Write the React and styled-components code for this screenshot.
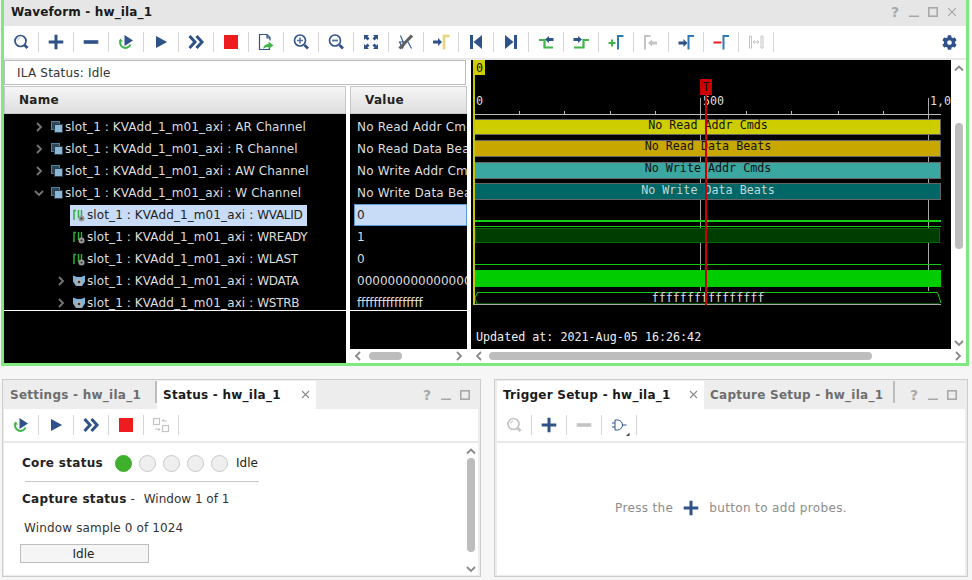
import React from "react";
import styled, { createGlobalStyle } from "styled-components";
import { FaCog } from "react-icons/fa";

const NAVY = "#2f5288";
const GREEN = "#3fb54a";
const OFF = "#c4c4c4";
const BLUE = "#2f7ab5";

const GlobalStyle = createGlobalStyle`
  html, body { margin: 0; padding: 0; overflow: hidden; background: #f6f6f6; }
  body { font-family: "DejaVu Sans", sans-serif; font-size: 12px; color: #222; }
`;

const glyphs = {
  search: (c = NAVY) => (
    <>
      <circle cx="10.5" cy="10" r="5.5" fill="none" stroke={c} strokeWidth="1.7" />
      <path d="M14.5 14L17.500 17" stroke={c} strokeWidth="2.6" />
      <path d="M7.500 9.500a3.200 3.200 0 0 1 2.500-2.500" fill="none" stroke="#9db4d4" strokeWidth="1" />
    </>
  ),
  plus: (c = NAVY) => <path d="M3.7 9.5h5.8V3.7h3v5.8h5.8v3h-5.8v5.8h-3v-5.8H3.7z" fill={c} />,
  minus: (c = NAVY) => <rect x="3.7" y="9.2" width="14.6" height="3.6" fill={c} />,
  rerun: () => (
    <>
      <path d="M5.500 9.500a5.300 5.300 0 1 0 10 4" fill="none" stroke={GREEN} strokeWidth="2" />
      <path d="M3.500 10.500h4.500L5.500 7.500z" fill={GREEN} />
      <path d="M9.500 4L18 9.500 9.500 15z" fill={NAVY} />
    </>
  ),
  play: () => <path d="M6 5l11.2 6L6 17z" fill={NAVY} />,
  forward: () => (
    <path d="M4.5 5l5.5 6-5.5 6M11.5 5l5.5 6-5.5 6" fill="none" stroke={NAVY} strokeWidth="3" />
  ),
  stop: () => <rect x="4" y="4" width="14" height="14" fill="#ee1c1f" />,
  exportFile: () => (
    <>
      <path d="M14.500 15v3.500H4.500v-15H12l3 3v3M12 3.500V7h3" fill="none" stroke={NAVY} strokeWidth="1.200" />
      <path d="M8 18c.5-3.500 2.500-5 5.500-5v-2.500l5 4-5 3.500v-2c-2 0-3.500.5-5.500 2z" fill={GREEN} />
    </>
  ),
  zoomIn: () => (
    <>
      <circle cx="10" cy="9.5" r="5.5" fill="none" stroke={NAVY} strokeWidth="1.600" />
      <path d="M14.500 14l3.500 3.500" stroke={NAVY} strokeWidth="2.600" />
      <path d="M7 9.500h6M10 6.500v6" stroke="#55749f" strokeWidth="1.600" />
    </>
  ),
  zoomOut: () => (
    <>
      <circle cx="10" cy="9.5" r="5.5" fill="none" stroke={NAVY} strokeWidth="1.600" />
      <path d="M14.500 14l3.500 3.500" stroke={NAVY} strokeWidth="2.600" />
      <path d="M7 9.500h6" stroke="#55749f" strokeWidth="1.800" />
    </>
  ),
  fit: () => (
    <g fill={NAVY}>
      <path d="M4 4h5L7.500 5.500l2 2-2 2-2-2L4 9z" />
      <path d="M18 4h-5l1.500 1.500-2 2 2 2 2-2L18 9z" />
      <path d="M4 18h5l-1.500-1.500 2-2-2-2-2 2L4 13z" />
      <path d="M18 18h-5l1.500-1.500-2-2 2-2 2 2L18 13z" />
    </g>
  ),
  cursorOff: () => (
    <>
      <path d="M5.500 4.500l3 7.500M13 11l3.500 6.500M4.500 11h6l-3 6z" fill="none" stroke={NAVY} strokeWidth="1.100" />
      <path d="M4.500 17.500L17 4.500" stroke="#606060" strokeWidth="3.200" />
    </>
  ),
  markerIn: () => (
    <>
      <path d="M3 9.500h5V7l4 4-4 4v-2.500H3z" fill={NAVY} />
      <path d="M14 18.500V5h5.500" fill="none" stroke="#e8d47c" strokeWidth="2.600" />
    </>
  ),
  first: () => <path d="M5 4h3v14H5zM8.500 11L17 4v14z" fill={NAVY} />,
  last: () => <path d="M14 4h3v14h-3zM13.500 11L5 4v14z" fill={NAVY} />,
  prevEdge: () => (
    <>
      <path d="M4 9h5.500v7.500H18" fill="none" stroke={GREEN} strokeWidth="2.200" />
      <path d="M10 8.500l4-3.500v2h4.500v3H14v2z" fill={NAVY} />
    </>
  ),
  nextEdge: () => (
    <>
      <path d="M4 16.500h9.500V9H19" fill="none" stroke={GREEN} strokeWidth="2.200" />
      <path d="M12 8.500L8 5v2H3.500v3H8v2z" fill={NAVY} />
    </>
  ),
  addMarker: () => (
    <>
      <path d="M3.500 11h2.500V8.500h2V11h2.500v2H8v2.500H6V13H3.500z" fill={GREEN} />
      <path d="M13 18.500V5h5.500" fill="none" stroke={BLUE} strokeWidth="2" />
    </>
  ),
  prevMarker: () => (
    <>
      <path d="M5 18.500V5h5.500" fill="none" stroke={OFF} strokeWidth="2" />
      <path d="M8 12l4-3.500v2h5v3h-5v2z" fill={OFF} />
    </>
  ),
  nextMarker: () => (
    <>
      <path d="M3.500 10.500h5V8l4 4-4 4v-2.500h-5z" fill={NAVY} />
      <path d="M13.500 18.500V5h5.500" fill="none" stroke={BLUE} strokeWidth="2" />
    </>
  ),
  removeMarker: () => (
    <>
      <rect x="3.500" y="10.500" width="8" height="2" fill="#ee1c1f" />
      <path d="M13.500 18.500V5h5.500" fill="none" stroke={BLUE} strokeWidth="2" />
    </>
  ),
  measure: () => (
    <path d="M4.500 5v12h2V5zM16 5v12h2V5zM8 11h6M8 11l2-1.800M8 11l2 1.800M14 11l-2-1.800M14 11l-2 1.800" fill="none" stroke={OFF} strokeWidth="1" />
  ),
  swap: () => (
    <g fill="none" stroke={OFF} strokeWidth="1.200">
      <rect x="3.500" y="4.500" width="6" height="6" />
      <rect x="12.500" y="11.500" width="6" height="6" />
      <path d="M12 7h5M12 7l2-1.500M5 15h5M10 15l-2 1.500" />
    </g>
  ),
  gate: () => (
    <>
      <path d="M7 6h2.500a5 5 0 0 1 0 10H7zM4 9h3M4 13h3M14.500 11h4" fill="none" stroke={NAVY} strokeWidth="1" />
      <path d="M21.500 18.500V22H18z" fill="#444" />
    </>
  ),
};

const mainTools = [
  ["search"], ["plus"], ["minus"], ["rerun"], ["play"], ["forward"], ["stop"], ["exportFile"],
  ["zoomIn"], ["zoomOut"], ["fit"], ["cursorOff"], ["markerIn"], ["first"], ["last"], ["prevEdge"],
  ["nextEdge"], ["addMarker"], ["prevMarker"], ["nextMarker"], ["removeMarker"], ["measure"],
];

const signals = [
  { name: "AR Channel", value: "No Read Addr Cmds", kind: "group", level: 1, twist: "closed", spacing: 0.2 },
  { name: "R Channel", value: "No Read Data Beats", kind: "group", level: 1, twist: "closed", spacing: 0.2 },
  { name: "AW Channel", value: "No Write Addr Cmds", kind: "group", level: 1, twist: "closed", spacing: 0.2 },
  { name: "W Channel", value: "No Write Data Beats", kind: "group", level: 1, twist: "open", spacing: 0.2 },
  { name: "WVALID", value: "0", kind: "wire", level: 2, selected: true },
  { name: "WREADY", value: "1", kind: "wire", level: 2 },
  { name: "WLAST", value: "0", kind: "wire", level: 2 },
  { name: "WDATA", value: "00000000000000000000", kind: "bus", level: 2, twist: "closed" },
  { name: "WSTRB", value: "ffffffffffffffff", kind: "bus", level: 2, twist: "closed", spacing: -0.12 },
];

const Page = styled.div`
  width: 972px;
  height: 580px;
  overflow: hidden;
  background: #f6f6f6;
  display: flex;
  flex-direction: column;
`;

const WaveWindow = styled.section`
  width: 962px;
  height: 363px;
  margin-left: 1px;
  flex: none;
  border: 3px solid #80e880;
  border-top: 0;
  background: #fff;
  display: flex;
  flex-direction: column;
`;

const TitleBar = styled.header`
  height: 26px;
  box-sizing: border-box;
  flex: none;
  background: #e6e6e6;
  display: flex;
  align-items: center;
  padding: 0 9px 2px 7px;
`;

const Title = styled.div`
  font-weight: 700;
  font-size: 12px;
  letter-spacing: 0.15px;
  color: #1a1a1a;
  flex: 1;
`;

const WinControls = styled.div`
  display: flex;
  align-items: center;
  gap: 9px;
`;

const Help = styled.span`
  font-weight: 700;
  font-size: 14px;
  line-height: 14px;
  color: #a8a8a8;
  width: 10px;
  text-align: center;
`;

const Toolbar = styled.div`
  height: 32px;
  flex: none;
  border-bottom: 2px solid #e8e8e8;
  background: #fff;
  display: flex;
  align-items: center;
`;

const ToolButton = styled.div`
  width: 35px;
  height: 20px;
  flex: none;
  display: flex;
  align-items: center;
  justify-content: center;
  border-right: 1px solid #d6d6d6;
  box-sizing: border-box;
`;

const GearSlot = styled.div`
  margin-left: auto;
  margin-right: 9px;
  color: ${NAVY};
  display: flex;
`;

const Split = styled.div`
  flex: 1;
  display: flex;
  min-height: 0;
`;

const SignalPane = styled.div`
  width: 463px;
  flex: none;
  display: flex;
  flex-direction: column;
`;

const IlaStatus = styled.div`
  height: 25px;
  box-sizing: border-box;
  flex: none;
  border: 1px solid #bdbdbd;
  width: 462px;
  padding-left: 12px;
  letter-spacing: 0.2px;
  display: flex;
  align-items: center;
  color: #333;
`;

const Columns = styled.div`
  flex: 1;
  display: grid;
  grid-template-columns: 342px 117px;
  column-gap: 4px;
  padding-top: 1px;
  min-height: 0;
`;

const Column = styled.div`
  display: flex;
  flex-direction: column;
  min-height: 0;
  min-width: 0;
`;

const ColumnHead = styled.div`
  height: 28px;
  flex: none;
  box-sizing: border-box;
  border: 1px solid #c8c8c8;
  background: linear-gradient(#f6f6f6, #dedede);
  display: flex;
  align-items: center;
  padding-left: 14px;
  font-weight: 700;
  letter-spacing: 0.3px;
  color: #222;
`;

const ColumnBody = styled.div`
  flex: 1;
  background: #000;
  min-height: 0;
`;

const Rows = styled.div`
  height: 194px;
  padding-top: 2px;
  border-bottom: 1px solid #fff;
  overflow: hidden;
`;

const TreeRow = styled.div`
  height: 22px;
  display: flex;
  align-items: center;
  padding-left: ${(p) => (p.$level === 1 ? 29 : 51)}px;
  color: #dedede;
`;

const Twist = styled.span`
  width: 12px;
  height: 12px;
  margin-right: 3px;
  flex: none;
  display: flex;
  align-items: center;
  justify-content: center;
`;

const Label = styled.span`
  display: flex;
  align-items: center;
  height: ${(p) => (p.$selected ? 21 : 22)}px;
  padding: 0 5px 0 2px;
  white-space: pre;
  letter-spacing: 0.1px;
  background: ${(p) => (p.$selected ? "#c8dcf8" : "transparent")};
  color: ${(p) => (p.$selected ? "#222" : "inherit")};
`;

const Port = styled.span`
  letter-spacing: ${(p) => (p.$level === 1 ? 0.1 : -0.3)}px;
`;

const SignalIcon = styled.svg`
  width: 14px;
  height: 14px;
  margin-right: 1px;
  flex: none;
`;

const ValueCell = styled.div`
  height: 22px;
  box-sizing: border-box;
  display: flex;
  align-items: center;
  white-space: nowrap;
  overflow: hidden;
  letter-spacing: ${(p) => p.$spacing || 0}px;
  margin-left: ${(p) => (p.$selected ? 4 : 0)}px;
  padding-left: ${(p) => (p.$selected ? 2 : 7)}px;
  border: ${(p) => (p.$selected ? "1px solid #5a9ad8" : "0")};
  background: ${(p) => (p.$selected ? "#c8dcf8" : "transparent")};
  color: ${(p) => (p.$selected ? "#222" : "#dedede")};
`;

const HBar = styled.div`
  height: 14px;
  flex: none;
  background: #fff;
  display: flex;
  align-items: center;
  justify-content: space-between;
  padding: 0 3px;
`;

const HTrack = styled.div`
  flex: 1;
  height: 8px;
  margin: 0 4px;
  display: flex;
`;

const Thumb = styled.div`
  background: #bdbdbd;
  border-radius: 4px;
`;

const HThumb = styled(Thumb)`
  margin-left: ${(p) => p.$start}px;
  width: ${(p) => p.$size}px;
`;

const VBar = styled.div`
  width: ${(p) => p.$width || 15}px;
  flex: none;
  background: #fff;
  display: flex;
  flex-direction: column;
  align-items: center;
  justify-content: space-between;
  padding: 3px 0 1px;
  box-sizing: border-box;
`;

const VTrack = styled.div`
  flex: 1;
  width: 8px;
  display: flex;
  flex-direction: column;
`;

const VThumb = styled(Thumb)`
  margin-top: ${(p) => p.$start}px;
  height: ${(p) => p.$size}px;
`;

const WavePane = styled.div`
  flex: 1;
  margin-left: 4px;
  display: flex;
  flex-direction: column;
  min-width: 0;
`;

const WaveRow = styled.div`
  flex: 1;
  display: flex;
  min-height: 0;
`;

const WaveSvg = styled.svg`
  width: 480px;
  height: 289px;
  flex: none;
  display: block;
  background: #000;
`;

const BottomRow = styled.div`
  flex: 1;
  display: flex;
  gap: 13px;
  padding: 13px 0 3px 2px;
`;

const Panel = styled.section`
  width: ${(p) => p.$width}px;
  box-sizing: border-box;
  flex: none;
  border: 1px solid #cccccc;
  padding: 1px 2px 1px ${(p) => p.$left}px;
  background: #ededed;
  display: flex;
  flex-direction: column;
`;

const TabBar = styled.div`
  height: 28px;
  flex: none;
  display: flex;
  align-items: stretch;
`;

const Tab = styled.div`
  width: ${(p) => p.$width}px;
  box-sizing: border-box;
  flex: none;
  display: flex;
  align-items: center;
  justify-content: space-between;
  padding: 0 6px 1px 6px;
  font-weight: 700;
  letter-spacing: 0.25px;
  background: ${(p) => (p.$active ? "#fff" : "transparent")};
  color: ${(p) => (p.$active ? "#1a1a1a" : "#6e6e6e")};
  white-space: nowrap;
`;

const TabDivider = styled.div`
  width: 2px;
  flex: none;
  height: 22px;
  background: #bcbcbc;
`;

const PanelControls = styled(WinControls)`
  margin-left: auto;
  padding: 0 ${(p) => p.$right}px 0 0;
`;

const PanelBody = styled.div`
  flex: 1;
  background: #fff;
  display: flex;
  min-height: 0;
`;

const StatusContent = styled.div`
  flex: 1;
  padding: 10px 0 0 18px;
  display: flex;
  flex-direction: column;
  align-items: flex-start;
`;

const CoreRow = styled.div`
  display: flex;
  align-items: center;
  height: 20px;
`;

const Strong = styled.span`
  font-weight: 700;
  letter-spacing: 0.3px;
  color: #222;
`;

const Lamps = styled.div`
  display: flex;
  gap: 7px;
  margin: 0 8px 0 12px;
`;

const Lamp = styled.span`
  width: 17px;
  height: 17px;
  box-sizing: border-box;
  border-radius: 50%;
  border: 1px solid ${(p) => (p.$on ? "#3fb02c" : "#c8c8c8")};
  background: ${(p) => (p.$on ? "#3fb02c" : "#efefef")};
`;

const Rule = styled.div`
  width: 234px;
  height: 1px;
  background: #c8c8c8;
  margin: 8px 0 7px 3px;
`;

const CaptureRow = styled.div`
  height: 20px;
  display: flex;
  align-items: center;
  color: #333;
`;

const CaptureValue = styled.span`
  margin-left: 9px;
`;

const SampleLine = styled.div`
  margin: 9px 0 6px 2px;
  height: 20px;
  letter-spacing: 0.15px;
  display: flex;
  align-items: center;
  color: #333;
`;

const ProgressBox = styled.div`
  width: 129px;
  height: 19px;
  box-sizing: border-box;
  border: 1px solid #bdbdbd;
  background: #f5f5f5;
  margin-left: -2px;
  padding-right: 2px;
  display: flex;
  align-items: center;
  justify-content: center;
  color: #222;
`;

const EmptyHint = styled.div`
  flex: 1;
  display: flex;
  align-items: center;
  justify-content: center;
  gap: 7px;
  color: #8c8c8c;
  letter-spacing: 0.35px;
  padding-bottom: 3px;
`;

const Glyph = ({ name, color, size = 22 }) => (
  <svg width={size} height={size} viewBox="0 0 22 22">{glyphs[name](color)}</svg>
);

const Tools = ({ items }) => (
  <>
    {items.map(([name, color], i) => (
      <ToolButton key={i}>
        <Glyph name={name} color={color} />
      </ToolButton>
    ))}
  </>
);

const Arrow = ({ dir, color = "#8a8a8a" }) => {
  const d = {
    up: "M1 7.500L5 3.500 9 7.500",
    down: "M1 3L5 7 9 3",
    left: "M7 1L3 5 7 9",
    right: "M3 1L7 5 3 9",
  }[dir];
  return (
    <svg width="10" height="10" viewBox="0 0 10 10">
      <path d={d} fill="none" stroke={color} strokeWidth="1.800" />
    </svg>
  );
};

const SignalGlyph = ({ kind }) => (
  <SignalIcon viewBox="0 0 14 14">
    {kind === "group" && (
      <>
        <rect x="1.500" y="1.500" width="8" height="8" fill="#2a4a5a" stroke="#4d7f9f" />
        <rect x="4.500" y="4.500" width="8" height="8" fill="#8cb8d8" stroke="#2b3f4f" />
      </>
    )}
    {kind === "wire" && (
      <>
        <path d="M2 12V2.500h2M6.500 10V2M9.500 8V2" fill="none" stroke="#2fae3c" strokeWidth="1.500" />
        <circle cx="9.500" cy="10.500" r="3" fill="#9a9a9a" />
        <circle cx="9.500" cy="10.500" r="1.100" fill="#333" />
      </>
    )}
    {kind === "bus" && (
      <>
        <path d="M1 1.500l4 1.500h4l4-1.500v6L10 12H4L1 7.500z" fill="#7db4dc" />
        <circle cx="7" cy="8" r="3.300" fill="#b0b0b0" />
        <circle cx="7" cy="8" r="1.300" fill="#333" />
      </>
    )}
  </SignalIcon>
);

const Close = ({ color = "#8a8a8a", size = 9 }) => (
  <svg width={size} height={size} viewBox="0 0 9 9">
    <path d="M1 1l7 7M8 1L1 8" stroke={color} strokeWidth="1.100" />
  </svg>
);

const Minimize = () => (
  <svg width="10" height="11" viewBox="0 0 10 11">
    <rect x="0" y="8.500" width="10" height="1.500" fill="#a8a8a8" />
  </svg>
);

const Restore = () => (
  <svg width="10" height="10" viewBox="0 0 10 10">
    <rect x="0.800" y="0.800" width="8.400" height="8.400" fill="none" stroke="#a8a8a8" strokeWidth="1.600" />
  </svg>
);

const buses = [
  { y: 119.5, h: 15, fill: "#cdcd00", text: "No Read Addr Cmds", ink: "#111", ty: 129 },
  { y: 140.5, h: 16, fill: "#c8a800", text: "No Read Data Beats", ink: "#111", ty: 150 },
  { y: 162.5, h: 16, fill: "#3aa8a0", text: "No Write Addr Cmds", ink: "#111", ty: 172 },
  { y: 183.5, h: 16, fill: "#006666", text: "No Write Data Beats", ink: "#c4d8d8", ty: 194 },
];

const minorTicks = [519, 564, 610, 655, 746, 791, 838, 883];

const Waveform = () => (
  <WaveSvg viewBox="471 60 480 289" fontFamily="'DejaVu Sans Mono', monospace" fontSize="11.7">
    <path d="M700.500 98V291M928.500 98V291" stroke="#a8a8a8" />
    <path d="M475 114.500H941" stroke="#bdbdbd" />
    {minorTicks.map((x) => (
      <path key={x} d={`M${x + 0.5} 111V114`} stroke="#bdbdbd" />
    ))}
    <text x="476" y="105" fill="#ddd">0</text>
    <text x="703" y="105" fill="#ddd">500</text>
    <text x="930" y="105" fill="#ddd">1,0</text>
    {buses.map((b) => (
      <g key={b.text}>
        <rect x="474.500" y={b.y} width="466" height={b.h} fill={b.fill} stroke="#666" />
        <text x="708" y={b.ty} fill={b.ink} textAnchor="middle">{b.text}</text>
      </g>
    ))}
    <rect x="475" y="220" width="466" height="2" fill="#14d214" />
    <path d="M475 226.500H941" stroke="#14c814" />
    <rect x="475.500" y="228.500" width="464" height="14" fill="#003d00" stroke="#006600" />
    <path d="M475 264.500H941" stroke="#14c814" />
    <rect x="475" y="270" width="466" height="17" fill="#00cc00" />
    <path d="M475 298L477.500 292.500H937.500L941 303" fill="none" stroke="#14c814" />
    <path d="M475 298L477 304H939" fill="none" stroke="#14a014" />
    <path d="M475 304.500H941" stroke="#a8a8a8" />
    <text x="708" y="302" fill="#ddd" textAnchor="middle">ffffffffffffffff</text>
    <rect x="473" y="60" width="2" height="245" fill="#c8c800" />
    <rect x="473" y="60" width="12" height="15" fill="#cdcd00" />
    <text x="476" y="71.500" fill="#111">0</text>
    <rect x="705" y="90" width="2" height="215" fill="#cc0000" />
    <rect x="700" y="79" width="12" height="16" fill="#cc0000" />
    <text x="706" y="91" fill="#111" textAnchor="middle">T</text>
    <text x="476" y="341" fill="#eee">Updated at: 2021-Aug-05 16:26:42</text>
  </WaveSvg>
);

export default function App() {
  return (
    <Page>
      <GlobalStyle />
      <WaveWindow>
        <TitleBar>
          <Title>Waveform - hw_ila_1</Title>
          <WinControls>
            <Help>?</Help>
            <Minimize />
            <Restore />
            <Close color="#a8a8a8" size={10} />
          </WinControls>
        </TitleBar>
        <Toolbar>
          <Tools items={mainTools} />
          <GearSlot><FaCog size={15} /></GearSlot>
        </Toolbar>
        <Split>
          <SignalPane>
            <IlaStatus>ILA Status: Idle</IlaStatus>
            <Columns>
              <Column>
                <ColumnHead>Name</ColumnHead>
                <ColumnBody>
                  <Rows>
                    {signals.map((s) => (
                      <TreeRow key={s.name} $level={s.level}>
                        <Twist>
                          {s.twist && <Arrow dir={s.twist === "open" ? "down" : "right"} color="#777" />}
                        </Twist>
                        <Label $selected={s.selected}>
                          <SignalGlyph kind={s.kind} />
                          {"slot_1 : KVAdd_1_m01_axi : "}
                          <Port $level={s.level}>{s.name}</Port>
                        </Label>
                      </TreeRow>
                    ))}
                  </Rows>
                </ColumnBody>
              </Column>
              <Column>
                <ColumnHead>Value</ColumnHead>
                <ColumnBody>
                  <Rows>
                    {signals.map((s) => (
                      <ValueCell key={s.name} $selected={s.selected} $spacing={s.spacing}>{s.value}</ValueCell>
                    ))}
                  </Rows>
                </ColumnBody>
                <HBar>
                  <Arrow dir="left" />
                  <HTrack><HThumb $start={2} $size={33} /></HTrack>
                  <Arrow dir="right" />
                </HBar>
              </Column>
            </Columns>
          </SignalPane>
          <WavePane>
            <WaveRow>
              <Waveform />
              <VBar>
                <Arrow dir="up" />
                <VTrack><VThumb $start={50} $size={126} /></VTrack>
                <Arrow dir="down" />
              </VBar>
            </WaveRow>
            <HBar>
              <Arrow dir="left" />
              <HTrack><HThumb $start={1} $size={383} /></HTrack>
              <Arrow dir="right" />
            </HBar>
          </WavePane>
        </Split>
      </WaveWindow>

      <BottomRow>
        <Panel $width={479} $left={1}>
          <TabBar>
            <Tab $width={151}>Settings - hw_ila_1</Tab>
            <TabDivider />
            <Tab $width={159} $active>
              Status - hw_ila_1
              <Close />
            </Tab>
            <PanelControls $right={8}>
              <Help>?</Help>
              <Minimize />
              <Restore />
            </PanelControls>
          </TabBar>
          <Toolbar>
            <Tools items={[["rerun"], ["play"], ["forward"], ["stop"], ["swap"]]} />
          </Toolbar>
          <PanelBody>
            <StatusContent>
              <CoreRow>
                <Strong>Core status</Strong>
                <Lamps>
                  <Lamp $on />
                  <Lamp />
                  <Lamp />
                  <Lamp />
                  <Lamp />
                </Lamps>
                Idle
              </CoreRow>
              <Rule />
              <CaptureRow>
                <Strong>Capture status</Strong>&nbsp;-
                <CaptureValue>Window 1 of 1</CaptureValue>
              </CaptureRow>
              <SampleLine>Window sample 0 of 1024</SampleLine>
              <ProgressBox>Idle</ProgressBox>
            </StatusContent>
            <VBar $width={14}>
              <Arrow dir="up" />
              <VTrack><VThumb $start={2} $size={94} /></VTrack>
              <Arrow dir="down" />
            </VBar>
          </PanelBody>
        </Panel>
        <Panel $width={474} $left={2}>
          <TabBar>
            <Tab $width={207} $active>
              Trigger Setup - hw_ila_1
              <Close />
            </Tab>
            <Tab $width={189}>Capture Setup - hw_ila_1</Tab>
            <TabDivider />
            <PanelControls $right={8}>
              <Help>?</Help>
              <Minimize />
              <Restore />
            </PanelControls>
          </TabBar>
          <Toolbar>
            <Tools items={[["search", OFF], ["plus"], ["minus", OFF], ["gate"]]} />
          </Toolbar>
          <PanelBody>
            <EmptyHint>
              Press the
              <Glyph name="plus" size={22} />
              button to add probes.
            </EmptyHint>
          </PanelBody>
        </Panel>
      </BottomRow>
    </Page>
  );
}
